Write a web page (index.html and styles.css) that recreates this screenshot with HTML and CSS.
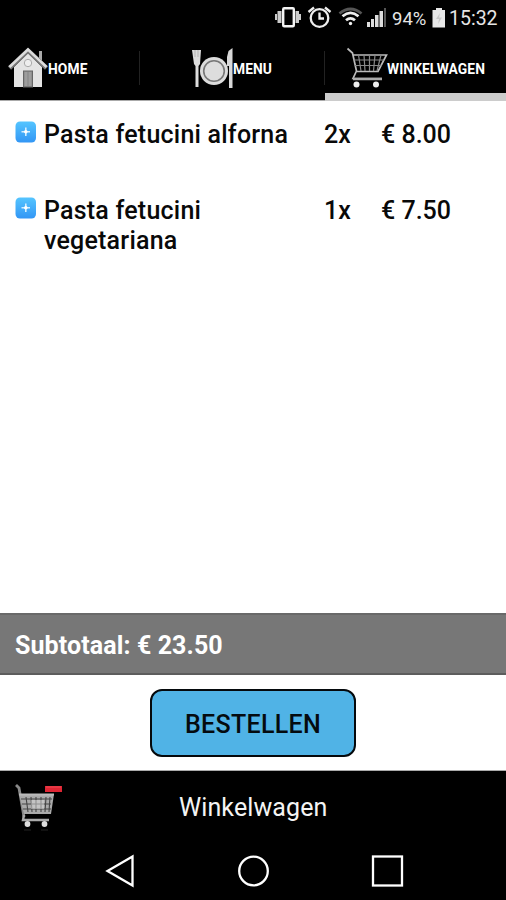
FILE: index.html
```html
<!DOCTYPE html>
<html lang="nl">
<head>
<meta charset="utf-8">
<title>Winkelwagen</title>
<link rel="stylesheet" href="styles.css">
</head>
<body>
<div class="screen">
  <header class="status">
    <svg class="status-icons" width="112" height="36" viewBox="274 0 112 36">
      <g fill="#ccc"><rect x="275" y="14" width="2" height="6"/><rect x="277.500" y="11" width="4" height="12"/><rect x="295.500" y="11" width="3.500" height="12"/><rect x="299" y="14" width="2" height="6"/></g>
      <rect x="283.2" y="8.2" width="10.6" height="18" rx="1" fill="none" stroke="#f4f4f4" stroke-width="2.4"/>
      <g fill="none" stroke="#eee" stroke-width="2.3"><circle cx="319.500" cy="18" r="8.800"/><path d="M319.500 12.500V18.500H324M308.500 12L314 7.500M325 7.500L330.500 12"/></g>
      <g fill="none" stroke-width="2.800"><path d="M339.500 13.500Q350.500 4.500 361.500 13.500" stroke="#555"/><path d="M342.500 16.200Q350.500 9.500 358.500 16.200M346 20.300Q350.500 16.500 355 20.300" stroke="#eee"/></g>
      <circle cx="350.500" cy="23.500" r="1.700" fill="#eee"/>
      <g fill="#ddd"><rect x="367" y="22" width="3" height="5"/><rect x="371" y="19" width="3" height="8"/><rect x="375" y="15" width="3.500" height="12"/><rect x="379.500" y="11" width="3.500" height="16"/></g><rect x="384" y="8" width="2" height="19" fill="#555"/>
    </svg>
    <span class="battery-level">94%</span>
    <svg class="battery" width="14" height="20" viewBox="0 0 14 20"><path d="M4 0H10V2H13V19.500H.5V2H4Z" fill="#e8e8e8"/><path d="M8 5L4 11H7L6 16L10 9.500H7Z" fill="#c9c9c9"/></svg>
    <span class="clock">15:32</span>
  </header>
  <nav class="tabs">
    <a class="tab tab-home">
      <svg width="40" height="42" viewBox="8 47 40 42">
        <path d="M39 51H42V61L39 58Z" fill="#aaa"/>
        <path d="M14 67L28 53L42 67V87H14Z" fill="#e4e4e4"/>
        <path d="M9.500 68L28 50.500L46.500 68" fill="none" stroke="#777" stroke-width="4.500"/>
        <path d="M9.500 67L28 49.500L46.500 67" fill="none" stroke="#ddd" stroke-width="2.500"/>
        <circle cx="28" cy="63" r="3.700" fill="#eee" stroke="#aaa"/>
        <rect x="23.500" y="71" width="9" height="16" fill="#909090" stroke="#666"/><path d="M26 72V86M30 72V86" stroke="#aaa"/>
      </svg><span>HOME</span>
    </a>
    <a class="tab tab-menu">
      <svg width="42" height="42" viewBox="191 47 42 42">
        <path d="M192 50H201L200 64L198.500 66V87H195.500V66L194 64Z" fill="#ddd"/><path d="M195 50V57M198 50V57" stroke="#aaa" stroke-width=".8"/>
        <path d="M228.500 51L232.500 48V88H229V66H227V57Z" fill="#d8d8d8"/>
        <circle cx="214" cy="71" r="14" fill="#dcdcdc"/><circle cx="214" cy="71" r="10.300" fill="#ddd" stroke="#777" stroke-width="1.600"/>
      </svg><span>MENU</span>
    </a>
    <a class="tab tab-cart">
      <svg width="42" height="42" viewBox="346 47 42 42">
        <path d="M347.500 48.500L352.500 53L356.500 71L353 78.500H382M353 55H386.500L378 71.500H357" fill="none" stroke="#bbb" stroke-width="1.700"/>
        <path d="M353.500 60H384M355 65.500H381.500M358.500 55L361 71M364 55L365 71M369.500 55V71M375 55L373.500 71M381 55L377 71" fill="none" stroke="#888" stroke-width="1.200"/>
        <path d="M353 79H382" stroke="#aaa" stroke-width="2.500"/><g fill="#eee"><circle cx="356.500" cy="84.500" r="3"/><circle cx="376" cy="84.500" r="3"/></g>
      </svg><span>WINKELWAGEN</span>
    </a>
  </nav>
  <main class="items">
    <div class="item">
      <svg class="plus" width="22" height="22" viewBox="0 0 22 22"><use href="#plus-icon"/></svg>
      <div class="name">Pasta fetucini alforna</div><div class="qty">2x</div><div class="price">€ 8.00</div>
    </div>
    <div class="item">
      <svg class="plus" width="22" height="22" viewBox="0 0 22 22">
        <defs><linearGradient id="blue" x2="0" y2="1"><stop stop-color="#55c5ff"/><stop offset="1" stop-color="#3296f5"/></linearGradient>
        <g id="plus-icon"><rect x=".5" y=".5" width="20.500" height="21" rx="4.500" fill="url(#blue)"/><path d="M10.800 6.500V15M6.500 10.800H15" stroke="#d5efff" stroke-width="1.600"/><circle cx="10.800" cy="10.800" r="1.800" fill="#fff"/></g></defs>
        <use href="#plus-icon"/></svg>
      <div class="name">Pasta fetucini<br>vegetariana</div><div class="qty">1x</div><div class="price">€ 7.50</div>
    </div>
  </main>
  <div class="subtotal">Subtotaal: € 23.50</div>
  <div class="order"><button class="order-button">BESTELLEN</button></div>
  <footer class="cart-bar">
    <svg width="50" height="50" viewBox="14 783 50 50">
      <path d="M16 785L19 788L24 817" fill="none" stroke="#888" stroke-width="2.800"/>
      <path d="M19 794H54L51 814H24Z" fill="#aaa"/>
      <path d="M21 799H52M22 804H51M23 809H51M26 797L28 812M31 797L32 812M36 797V812M41 797V812M46 797L45 812M50 797L49 812" stroke="#444" stroke-width="1.100"/>
      <path d="M31 800H44V809H31Z" fill="#ddd" opacity=".5"/>
      <path d="M19 794.500H54" stroke="#bbb" stroke-width="2.200"/>
      <path d="M24 815L23 820H49" fill="none" stroke="#aaa" stroke-width="2.400"/><g fill="#ddd"><circle cx="27.500" cy="824" r="2.900"/><circle cx="44.500" cy="824" r="2.900"/></g>
      <path d="M24 830H31M41 830H48" stroke="#222"/>
      <rect x="45" y="786" width="17" height="6" fill="#df2634"/><path d="M46 787H61" stroke="#f04a54"/>
    </svg>
    <span class="cart-title">Winkelwagen</span>
  </footer>
  <div class="navigation">
    <svg width="300" height="40" viewBox="105 851 300 40" fill="none" stroke="#fff" stroke-width="2.300"><path d="M107.500 871L132.500 856.500V885.500Z"/><circle cx="253.500" cy="871" r="14.300"/><rect x="373" y="856.500" width="29" height="29"/></svg>
  </div>
</div>
</body>
</html>
```

FILE: styles.css
```css
* { box-sizing: border-box; }
body { margin: 0; background: #000; font-family: Roboto, "Liberation Sans", sans-serif; }
.screen { width: 506px; height: 900px; display: flex; flex-direction: column; background: #fff; overflow: hidden; }
svg { display: block; flex: none; }
.status { height: 36px; background: #000; color: #e5e5e5; display: flex; align-items: center; padding-left: 274px; }
.battery-level { width: 40px; margin-left: 6px; font-size: 18.5px; line-height: 22px; padding-top: 1px; }
.battery { margin-right: 3px; }
.clock { font-size: 19.5px; line-height: 22px; padding-top: 1px; white-space: nowrap; }
.tabs { height: 65px; background: #000; border-bottom: 1px solid #aaa; display: grid; grid-template-columns: 140px 185px 181px; color: #fff; font-weight: 700; font-size: 13.8px; letter-spacing: .1px; }
.tab { display: flex; align-items: flex-start; padding-top: 11px; background: linear-gradient(#222, #222) right 15px / 1px 34px no-repeat; }
.tab span { line-height: 20px; margin-top: 12px; }
.tab-home { padding-left: 8px; }
.tab-menu { padding-left: 51px; }
.tab-cart { padding-left: 21px; background: none; border-bottom: 8px solid #ccc; height: 65px; }
.tab-cart span { margin-left: -1px; }
.items { height: 512px; padding-top: 19px; color: #090909; font-size: 25px; font-weight: 500; line-height: 30px; }
.item { display: grid; grid-template-columns: 29px 280px 57px 1fr; padding-left: 15px; min-height: 60px; margin-bottom: 16px; }
.name { letter-spacing: .22px; }
.plus { margin-top: 1px; }
.subtotal { height: 62px; background: #777; border-top: 2px solid #696969; border-bottom: 2px solid #5d5d5d; color: #fff; font-size: 25px; font-weight: 700; letter-spacing: .1px; line-height: 62px; padding-left: 15px; }
.order { height: 96px; padding-top: 14px; display: flex; justify-content: center; align-items: flex-start; border-bottom: 1px solid #aaa; }
.order-button { width: 206px; height: 68px; border: 2px solid #05090c; border-radius: 12px; background: #50b3e6; color: #050b0f; font: 500 25px Roboto, sans-serif; letter-spacing: .3px; padding: 2px 0 0; }
.cart-bar { height: 75px; background: #000; color: #f4f4f4; display: flex; padding: 12px 0 0 14px; }
.cart-title { font-size: 25px; letter-spacing: .1px; line-height: 50px; margin-left: 115px; }
.navigation { height: 54px; padding: 5px 0 0 105px; background: #000; }
```
